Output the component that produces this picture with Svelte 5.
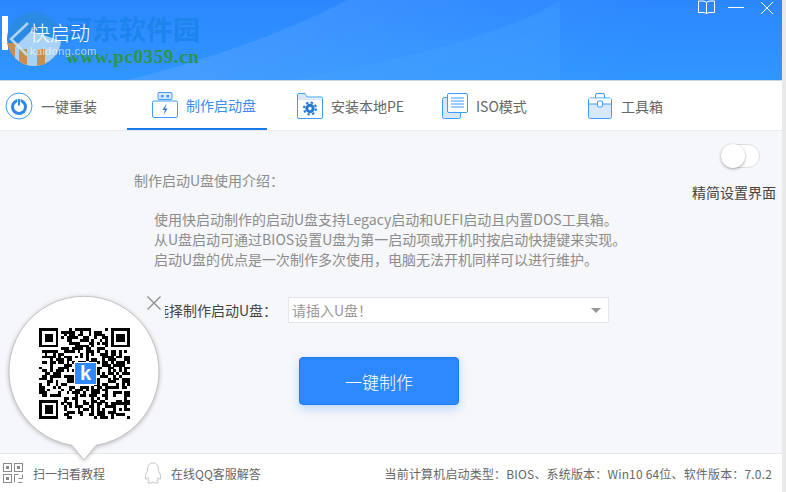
<script lang="ts">
  const TABS = [
    { id: "reinstall", label: "一键重装" },
    { id: "usb", label: "制作启动盘" },
    { id: "pe", label: "安装本地PE" },
    { id: "iso", label: "ISO模式" },
    { id: "tools", label: "工具箱" },
  ];

  // fake but stable qr matrix, finder patterns are drawn on top
  const SIZE = 33;
  let seed = 359;
  function rnd() {
    seed = (seed * 16807) % 2147483647;
    return seed / 2147483647;
  }

  function inFinder(x: number, y: number) {
    return (x < 8 && y < 8) || (x >= SIZE - 8 && y < 8) || (x < 8 && y >= SIZE - 8);
  }

  function finderCell(x: number, y: number) {
    const fx = x >= SIZE - 8 ? x - (SIZE - 7) : x;
    const fy = y >= SIZE - 8 ? y - (SIZE - 7) : y;
    if (fx < 0 || fy < 0 || fx > 6 || fy > 6) return false;
    if (fx === 0 || fx === 6 || fy === 0 || fy === 6) return true;
    return fx >= 2 && fx <= 4 && fy >= 2 && fy <= 4;
  }

  const cells: Array<[number, number]> = [];
  for (let y = 0; y < SIZE; y++) {
    for (let x = 0; x < SIZE; x++) {
      const on = inFinder(x, y) ? finderCell(x, y) : rnd() > 0.5;
      if (on) cells.push([x, y]);
    }
  }
</script>

<div class="window">
  <div class="app">
    <header class="top">
      <svg class="wedge" viewBox="0 0 782 80" preserveAspectRatio="none" aria-hidden="true">
        <defs>
          <linearGradient id="base" x1="0" y1="0" x2="0" y2="1">
            <stop offset="0" stop-color="#2c87ff" />
            <stop offset="1" stop-color="#2f96ff" />
          </linearGradient>
          <linearGradient id="band" x1="0" y1="0" x2="1" y2="0">
            <stop offset="0.1" stop-color="#62a8ff" stop-opacity="0.75" />
            <stop offset="0.8" stop-color="#62a8ff" stop-opacity="0" />
          </linearGradient>
        </defs>
        <rect width="782" height="80" fill="url(#base)" />
        <path d="M128 80 C 210 60 290 30 347 0 H782 V80 Z" fill="url(#band)" opacity="0.55" />
        <path d="M292 80 C 400 60 480 40 540 12 L 560 0 V80 Z" fill="#4aa4ff" opacity="0.3" />
      </svg>
      <div class="mark">河东软件园</div>
      <div class="mark-url">www.pc0359.cn</div>
      <div class="logo">
        <span class="logo-bar"></span>
        <svg class="logo-badge" viewBox="0 0 54 56" aria-hidden="true">
          <defs>
            <clipPath id="disc"><circle cx="27" cy="28" r="27" /></clipPath>
          </defs>
          <g clip-path="url(#disc)">
            <rect width="54" height="56" fill="#2b8be4" />
            <rect y="32" width="54" height="24" fill="#c8904f" />
            <path d="M8 36 L24 20 L54 30 V56 H8 Z" fill="#a9d3f6" />
            <rect x="12" y="38" width="8" height="18" fill="#c8904f" />
            <rect x="30" y="38" width="8" height="18" fill="#c8904f" />
            <path d="M21 12 L4 28 L20 44" fill="none" stroke="#cfe6fa" stroke-width="2.5" opacity="0.8" />
          </g>
        </svg>
        <div class="logo-text">
          <strong>快启动</strong>
          <span>kaidong.com</span>
        </div>
      </div>
      <div class="win-btns">
        <svg viewBox="0 0 17 15" width="17" height="15" aria-hidden="true">
          <path d="M0.5 1 H5 Q8.5 1 8.5 3 V14 Q8.5 12.5 5 12.5 H0.5 Z M16.5 1 H12 Q8.5 1 8.5 3 V14 Q8.5 12.5 12 12.5 H16.5 Z" fill="none" stroke="#fff" stroke-width="1" />
        </svg>
        <svg viewBox="0 0 16 15" width="16" height="15" aria-hidden="true">
          <path d="M0 7.5 H16" stroke="#fff" stroke-width="1" />
        </svg>
        <svg viewBox="0 0 14 14" width="14" height="14" aria-hidden="true">
          <path d="M1 1 L13 13 M13 1 L1 13" stroke="#fff" stroke-width="1" />
        </svg>
      </div>
    </header>

    <nav class="tabs">
      {#each TABS as tab (tab.id)}
        <div class="tab {tab.id}" class:active={tab.id === "usb"}>
          {#if tab.id === "reinstall"}
            <svg viewBox="0 0 28 28" width="28" height="28" aria-hidden="true">
              <circle cx="14" cy="14" r="13" fill="#fff" stroke="#3d9bff" stroke-width="1" />
              <circle cx="14" cy="15" r="6.5" fill="none" stroke="#2e88e8" stroke-width="3" />
              <rect x="12.4" y="6" width="3.2" height="8" fill="#fff" />
              <rect x="13" y="7" width="2" height="6.5" fill="#2e88e8" />
            </svg>
          {:else if tab.id === "usb"}
            <svg viewBox="0 0 26 26" width="26" height="26" aria-hidden="true">
              <rect x="6" y="0.5" width="14" height="7" rx="1" fill="#d7e8fd" stroke="#3d9bff" />
              <rect x="9" y="3" width="2.5" height="2.5" fill="#3d9bff" />
              <rect x="14.5" y="3" width="2.5" height="2.5" fill="#3d9bff" />
              <rect x="0.5" y="9" width="25" height="16.5" rx="1.5" fill="#fff" stroke="#3d9bff" />
              <path d="M14.5 11.5 L10.5 18 H13 L11.5 23 L15.5 16.5 H13 Z" fill="#2478d8" />
            </svg>
          {:else if tab.id === "pe"}
            <svg viewBox="0 0 26 26" width="26" height="26" aria-hidden="true">
              <path d="M0.5 2 Q0.5 0.5 2 0.5 H8 L10 4 H24 Q25.5 4 25.5 5.5 V24 Q25.5 25.5 24 25.5 H2 Q0.5 25.5 0.5 24 Z" fill="#fff" stroke="#3d9bff" />
              <path d="M1 1 H8 L10 5.5 H25 V7 H1 Z" fill="#d7e8fd" />
              <circle cx="13" cy="15.5" r="3.2" fill="none" stroke="#2478d8" stroke-width="3" />
              <circle cx="13" cy="15.5" r="6" fill="none" stroke="#2478d8" stroke-width="2" stroke-dasharray="2.4 2.3" />
            </svg>
          {:else if tab.id === "iso"}
            <svg viewBox="0 0 26 26" width="26" height="26" aria-hidden="true">
              <rect x="0.5" y="4.5" width="18" height="21" rx="2" fill="#d7e8fd" stroke="#3d9bff" />
              <rect x="5.5" y="0.5" width="20" height="19" rx="1.5" fill="#fff" stroke="#3d9bff" />
              <path d="M9 5 H22 M9 8 H22 M9 11 H22 M9 14 H22" stroke="#3d9bff" stroke-width="1" />
            </svg>
          {:else}
            <svg viewBox="0 0 24 26" width="24" height="26" aria-hidden="true">
              <path d="M7.5 5 V2 Q7.5 0.5 9 0.5 H15 Q16.5 0.5 16.5 2 V5" fill="none" stroke="#3d9bff" />
              <rect x="0.5" y="5" width="23" height="20.5" rx="2" fill="#d7e8fd" stroke="#3d9bff" />
              <path d="M1 5.5 H23 V11 H1 Z" fill="#fff" />
              <path d="M0.5 11 H23.5" stroke="#3d9bff" />
              <rect x="9.5" y="8" width="5" height="6" rx="1" fill="#fff" stroke="#3d9bff" />
            </svg>
          {/if}
          <span>{tab.label}</span>
        </div>
      {/each}
    </nav>

    <main class="body">
      <div class="switch-box">
        <div class="switch"><span class="knob"></span></div>
        <span class="switch-label">精简设置界面</span>
      </div>

      <h1>制作启动U盘使用介绍：</h1>
      <div class="intro">
        <p>使用快启动制作的启动U盘支持Legacy启动和UEFI启动且内置DOS工具箱。</p>
        <p>从U盘启动可通过BIOS设置U盘为第一启动项或开机时按启动快捷键来实现。</p>
        <p>启动U盘的优点是一次制作多次使用，电脑无法开机同样可以进行维护。</p>
      </div>

      <div class="form-row">
        <label for="disk">选择制作启动U盘：</label>
        <div class="select" id="disk">
          <span>请插入U盘！</span>
          <i class="caret"></i>
        </div>
      </div>

      <button type="button" class="make">一键制作</button>
    </main>

    <footer class="foot">
      <div class="foot-item scan">
        <svg viewBox="0 0 20 20" width="20" height="20" aria-hidden="true">
          <g fill="none" stroke="#8a8a8a">
            <rect x="0.5" y="0.5" width="8" height="8" />
            <rect x="11.5" y="0.5" width="8" height="8" />
            <rect x="0.5" y="11.5" width="8" height="8" />
            <path d="M11.5 19.5 V11.5 H15.5 M19.5 11.5 V15.5 H15.5 M15 19.5 H19.5" />
          </g>
          <g fill="#8a8a8a">
            <rect x="3" y="3" width="3" height="3" />
            <rect x="14" y="3" width="3" height="3" />
            <rect x="3" y="14" width="3" height="3" />
          </g>
        </svg>
        <span>扫一扫看教程</span>
      </div>
      <div class="foot-item qq">
        <svg viewBox="0 0 18 22" width="18" height="22" aria-hidden="true">
          <path d="M9 1 C4.5 1 3.5 5 3.5 9 C2 11 1 14 1.5 17 C2.5 17.5 3.3 16.5 3.8 15.5 C4 17 4.5 18 5 19 C3.5 19.5 3 20.5 4.5 21 C6.5 21.3 8 20.5 9 20 C10 20.5 11.5 21.3 13.5 21 C15 20.5 14.5 19.5 13 19 C13.5 18 14 17 14.2 15.5 C14.7 16.5 15.5 17.5 16.5 17 C17 14 16 11 14.5 9 C14.5 5 13.5 1 9 1 Z" fill="#fff" stroke="#c4c4c4" />
        </svg>
        <span>在线QQ客服解答</span>
      </div>
      <div class="status">当前计算机启动类型：BIOS、系统版本：Win10 64位、软件版本：7.0.2</div>
    </footer>
  </div>

  <aside class="qr-pop">
    <svg class="bubble" viewBox="0 0 170 180" width="170" height="180" aria-hidden="true">
      <path d="M73 149.3 A75 75 0 1 1 97 149.3 L85 164 Z" fill="#fff" stroke="#c4c4c4" stroke-width="1" />
    </svg>
    <svg class="qr" viewBox="0 0 {SIZE} {SIZE}" width="91" height="91" shape-rendering="crispEdges" aria-label="二维码">
      {#each cells as [x, y] (x + "-" + y)}
        <rect {x} {y} width="1.02" height="1.02" fill="#000" />
      {/each}
    </svg>
    <span class="qr-logo">k</span>
    <button type="button" class="qr-close" aria-label="关闭">
      <svg viewBox="0 0 14 14" width="14" height="14" aria-hidden="true">
        <path d="M0.5 0.5 L13.5 13.5 M13.5 0.5 L0.5 13.5" stroke="#8a8a8a" stroke-width="1.2" />
      </svg>
    </button>
  </aside>
</div>

<style>
  :global(body) {
    margin: 0;
    background: #ececec;
  }

  .window {
    position: relative;
    width: 786px;
    height: 492px;
    overflow: hidden;
    background: #e9e9e9;
    font-family: "Noto Sans CJK SC", "Noto Sans", sans-serif;
    color: #666;
  }

  .app {
    width: 782px;
    height: 492px;
    display: flex;
    flex-direction: column;
    background: #f5f7fa;
  }

  .top {
    position: relative;
    flex: 0 0 80px;
    border-bottom: 1px solid #c8d6e8;
    overflow: hidden;
  }

  .wedge {
    position: absolute;
    inset: 0;
    width: 100%;
    height: 100%;
  }

  .mark {
    position: absolute;
    left: 65px;
    top: 11px;
    font: bold 27px/36px "Noto Sans CJK SC", serif;
    color: #1c84ec;
  }

  .mark-url {
    position: absolute;
    left: 66px;
    top: 46px;
    font: bold 19px/22px "Liberation Serif", serif;
    letter-spacing: 0.6px;
    color: #2f9447;
  }

  .logo {
    position: absolute;
    left: 2px;
    top: 11px;
    display: flex;
  }

  .logo-bar {
    width: 6px;
    height: 34px;
    margin-top: 5px;
    background: #fff;
  }

  .logo-badge {
    width: 54px;
    height: 56px;
    margin-left: -1px;
  }

  .logo-text {
    display: flex;
    flex-direction: column;
    margin: 10px 0 0 -31px;
    color: #fff;
  }

  .logo-text strong {
    font-size: 20px;
    line-height: 24px;
    font-weight: 300;
  }

  .logo-text span {
    font: 11px/12px "Liberation Sans", sans-serif;
    letter-spacing: 0.4px;
    opacity: 0.6;
  }

  .win-btns {
    position: absolute;
    right: 8px;
    top: 0;
    display: flex;
    align-items: center;
    gap: 13px;
  }

  .win-btns svg:last-child {
    margin-left: 3px;
  }

  .tabs {
    flex: 0 0 48px;
    display: flex;
    background: #fff;
    border-bottom: 1px solid #e9ecf0;
    padding-left: 5px;
    gap: 5px;
  }

  .tab {
    box-sizing: border-box;
    width: 140px;
    height: 49px;
    padding-left: 25px;
    display: flex;
    align-items: center;
    gap: 8px;
    font-size: 14px;
    color: #666;
  }

  .tab.reinstall {
    width: 117px;
    padding-left: 0;
  }

  .tab.tools svg {
    margin: 0 1px 0 1px;
  }

  .tab.active {
    color: #3a8cf0;
    border-bottom: 2px solid #1a7ae8;
  }

  .body {
    position: relative;
    flex: 1;
    min-height: 0;
    padding-left: 134px;
    color: #8c8c8c;
  }

  h1 {
    margin: 38px 0 0;
    font-size: 14px;
    line-height: 22px;
    font-weight: 400;
  }

  .intro {
    margin: 18px 0 0 20px;
  }

  .intro p {
    margin: 0;
    font-size: 14px;
    line-height: 20px;
  }

  .form-row {
    margin-top: 28px;
    display: flex;
    align-items: center;
  }

  label {
    width: 154px;
    box-sizing: border-box;
    padding-right: 11px;
    text-align: right;
    white-space: nowrap;
    color: #444;
    font-size: 14px;
  }

  .select {
    box-sizing: border-box;
    width: 321px;
    height: 26px;
    padding: 0 7px 0 3px;
    display: flex;
    align-items: center;
    justify-content: space-between;
    background: #fff;
    border: 1px solid #e3e6ea;
    font-size: 14px;
    color: #999;
  }

  .caret {
    width: 0;
    height: 0;
    border: 5px solid transparent;
    border-top: 5px solid #999;
    border-bottom: 0;
  }

  .make {
    display: block;
    box-sizing: border-box;
    width: 160px;
    height: 48px;
    margin: 34px 0 0 165px;
    background: #2e88ff;
    border: 1px solid #1a7bf5;
    border-radius: 4px;
    box-shadow: 0 4px 10px rgba(45, 136, 255, 0.28);
    color: #fff;
    font: 300 17px "Noto Sans CJK SC", sans-serif;
  }

  .switch-box {
    position: absolute;
    right: 6px;
    top: 13px;
    display: flex;
    flex-direction: column;
    align-items: flex-end;
    gap: 14px;
  }

  .switch {
    width: 39px;
    height: 24px;
    box-sizing: border-box;
    margin-right: 16px;
    border: 1px solid #dcdfe4;
    border-radius: 12px;
    background: #fff;
    position: relative;
  }

  .knob {
    position: absolute;
    left: -1px;
    top: -1px;
    width: 24px;
    height: 24px;
    border-radius: 50%;
    background: #fff;
    box-shadow: 0 1px 3px rgba(0, 0, 0, 0.35);
  }

  .switch-label {
    font-size: 14px;
    line-height: 20px;
    color: #444;
  }

  .foot {
    flex: 0 0 38px;
    display: flex;
    align-items: center;
    background: #fff;
    border-top: 1px solid #e6e8ec;
    font-size: 12px;
    color: #666;
  }

  .foot-item {
    display: flex;
    align-items: center;
  }

  .scan {
    margin-left: 3px;
    width: 141px;
    gap: 10px;
  }

  .qq {
    gap: 9px;
  }

  .status {
    margin-left: auto;
    margin-right: 10px;
    letter-spacing: 0.17px;
  }

  .qr-pop {
    position: absolute;
    left: -1px;
    top: 296px;
    width: 170px;
    height: 180px;
  }

  .bubble {
    position: absolute;
    left: 0;
    top: 0;
    filter: drop-shadow(0 1px 2px rgba(0, 0, 0, 0.25));
  }

  .qr {
    position: absolute;
    left: 40px;
    top: 32px;
  }

  .qr-logo {
    position: absolute;
    left: 75px;
    top: 66px;
    width: 21px;
    height: 21px;
    background: #2e88ff;
    border: 1px solid #fff;
    color: #fff;
    font: bold 20px/21px "Liberation Sans", sans-serif;
    text-align: center;
  }

  .qr-close {
    position: absolute;
    left: 145px;
    top: 0;
    width: 21px;
    height: 24px;
    padding: 0 0 0 3px;
    border: 0;
    background: #f5f7fa;
    display: flex;
    align-items: flex-start;
  }
</style>
